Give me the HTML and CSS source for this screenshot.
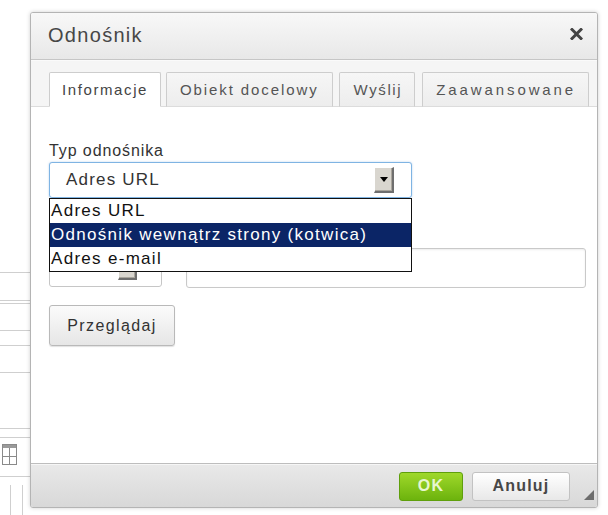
FILE: index.html
```html
<!DOCTYPE html>
<html lang="pl">
<head>
<meta charset="utf-8">
<title>Odnośnik</title>
<link rel="stylesheet" href="styles.css">
</head>
<body>
<div class="page">
  <!-- edge of the editor that sits behind the dialog -->
  <div class="editor-edge">
    <div class="hl hl-a"></div>
    <div class="hl hl-b"></div>
    <div class="hl hl-c"></div>
    <div class="hl hl-d"></div>
    <div class="hl hl-e"></div>
    <div class="hl hl-f"></div>
    <div class="hl hl-g"></div>
    <div class="hl hl-h"></div>
    <svg class="tbl-icon" width="16" height="22" viewBox="0 0 16 22">
      <rect x="0.5" y="0.5" width="14" height="20" fill="#fff" stroke="#8a8a8a"/>
      <rect x="1" y="1" width="13" height="3" fill="#9a9a9a"/>
      <line x1="7.5" y1="4" x2="7.5" y2="20" stroke="#8a8a8a"/>
      <line x1="1" y1="12.5" x2="14" y2="12.5" stroke="#8a8a8a"/>
    </svg>
    <div class="hl hl-i"></div>
    <div class="edge-box"></div>
  </div>

  <div class="dialog">
    <div class="dlg-title">
      <span class="dlg-title-text">Odnośnik</span>
      <svg class="dlg-close" width="13" height="12" viewBox="0 0 13 12">
        <path d="M2 1.5 L11 10.5 M11 1.5 L2 10.5" stroke="#444" stroke-width="3" stroke-linecap="square"/>
      </svg>
    </div>

    <div class="dlg-tabs">
      <div class="tab tab-active">Informacje</div>
      <div class="tab tab-target">Obiekt docelowy</div>
      <div class="tab tab-upload">Wyślij</div>
      <div class="tab tab-advanced">Zaawansowane</div>
    </div>

    <div class="dlg-body">
      <div class="field-label">Typ odnośnika</div>
      <div class="select-wrap">
        <div class="select select-focus">
          <span class="select-value">Adres URL</span>
          <span class="select-btn"><span class="tri"></span></span>
        </div>
        <ul class="listbox">
          <li>Adres URL</li>
          <li class="sel">Odnośnik wewnątrz strony (kotwica)</li>
          <li>Adres e-mail</li>
        </ul>
      </div>

      <!-- protocol select and address field, partly covered by the open list -->
      <div class="url-row">
        <div class="url-col proto-col">
          <div class="label-space"></div>
          <div class="select proto">
            <span class="select-btn small"><span class="tri"></span></span>
          </div>
        </div>
        <div class="url-col addr-col">
          <div class="label-space"></div>
          <div class="text-input"></div>
        </div>
      </div>

      <div class="btn-browse">Przeglądaj</div>
    </div>

    <div class="dlg-footer">
      <div class="btn btn-ok">OK</div>
      <div class="btn btn-cancel">Anuluj</div>
      <span class="grip"></span>
    </div>
  </div>
</div>
</body>
</html>
```

FILE: styles.css
```css
* { box-sizing: border-box; }

html, body {
  margin: 0;
  padding: 0;
  background: #fff;
}

body {
  font-family: "Liberation Sans", Arial, sans-serif;
  color: #333;
  width: 608px;
  height: 515px;
  overflow: hidden;
}

.page {
  position: relative;
  width: 608px;
  height: 515px;
}

/* ---- editor edge on the left ---- */
.editor-edge {
  width: 30px;
  padding-top: 272px;
  display: flex;
  flex-direction: column;
}

.hl {
  height: 1px;
  background: #cfcfcf;
}
.hl-a { margin-top: 0; }
.hl-b { margin-top: 27px; }
.hl-c { margin-top: 2px; }
.hl-d { margin-top: 26px; }
.hl-e { margin-top: 14px; }
.hl-f { margin-top: 26px; }
.hl-g { margin-top: 55px; }
.hl-h { margin-top: 8px; }

.tbl-icon {
  margin: 6px 0 0 2px;
}

.hl-i { margin-top: 10px; }

.edge-box {
  margin: 8px 0 0 10px;
  width: 13px;
  height: 40px;
  border-left: 1px solid #cfcfcf;
  border-right: 1px solid #cfcfcf;
}

/* ---- dialog ---- */
.dialog {
  position: absolute;
  left: 30px;
  top: 12px;
  width: 568px;
  height: 496px;
  border: 1px solid #b4b4b4;
  border-radius: 3px;
  box-shadow: 0 0 4px rgba(0, 0, 0, 0.18);
  background: #fff;
  display: flex;
  flex-direction: column;
  overflow: hidden;
}

.dlg-title {
  height: 47px;
  flex: none;
  display: flex;
  align-items: center;
  justify-content: space-between;
  padding: 0 14px 2px 17px;
  background: linear-gradient(#f8f8f8, #e8e8e8);
  border-bottom: 1px solid #c6c6c6;
}

.dlg-title-text {
  font-size: 20px;
  letter-spacing: 1.3px;
  color: #474747;
}

.dlg-close {
  display: block;
  margin-top: -3px;
}

/* ---- tabs ---- */
.dlg-tabs {
  flex: none;
  height: 47px;
  display: flex;
  align-items: flex-end;
  gap: 5px;
  padding: 0 0 0 18px;
  background: #f5f5f5;
  border-top: 1px solid #fafafa;
  border-bottom: 1px solid #dcdcdc;
}

.tab {
  height: 35px;
  margin-bottom: -1px;
  padding: 0 12px 0 12px;
  display: flex;
  align-items: center;
  font-size: 15px;
  letter-spacing: 1.6px;
  color: #555;
  background: linear-gradient(#f6f6f6, #ededed);
  border: 1px solid #cdcdcd;
  border-bottom-color: #dcdcdc;
  border-radius: 2px 2px 0 0;
}

.tab-active {
  background: #fff;
  border-bottom-color: #fff;
  color: #444;
}

.tab-target {
  letter-spacing: 1.9px;
  padding: 0 13px;
}

.tab-upload {
  padding: 0 12px 0 14px;
  margin-left: 1px;
}

.tab-advanced {
  letter-spacing: 2.9px;
  padding: 0 12px 0 13px;
  margin-left: 2px;
}

/* ---- body ---- */
.dlg-body {
  flex: 1;
  padding: 34px 11px 0 18px;
  background: #fff;
}

.field-label {
  font-size: 16px;
  letter-spacing: 0.9px;
  line-height: 19px;
  color: #333;
}

.select-wrap {
  position: relative;
  margin-top: 2px;
  width: 363px;
}

.select {
  height: 36px;
  display: flex;
  align-items: center;
  justify-content: space-between;
  padding: 0 17px 0 16px;
  border: 1px solid #c6c6c6;
  border-radius: 3px;
  background: #fff;
}

.select-focus {
  border-color: #7fb4e3;
  box-shadow: 0 0 2px rgba(100, 160, 220, 0.5);
}

.select-value {
  font-size: 17px;
  letter-spacing: 1.2px;
  color: #333;
}

.select-btn {
  width: 20px;
  height: 26px;
  display: flex;
  align-items: center;
  justify-content: center;
  background: #d9d6cf;
  border-top: 1px solid #fff;
  border-left: 1px solid #fff;
  border-right: 2px solid #6f6f6f;
  border-bottom: 2px solid #6f6f6f;
  box-shadow: inset -1px -1px 0 #a9a59c;
}

.tri {
  width: 0;
  height: 0;
  border-left: 4px solid transparent;
  border-right: 4px solid transparent;
  border-top: 5px solid #000;
}

/* open option list */
.listbox {
  position: absolute;
  left: 0;
  top: 36px;
  width: 363px;
  margin: 0;
  padding: 0;
  list-style: none;
  border: 1px solid #111;
  background: #fff;
  z-index: 2;
}

.listbox li {
  height: 24px;
  line-height: 24px;
  padding-left: 1px;
  font-size: 17px;
  letter-spacing: 1.3px;
  color: #111;
  white-space: nowrap;
}

.listbox li.sel {
  background: #0b2566;
  color: #fff;
}

/* protocol + address row */
.url-row {
  display: flex;
  gap: 24px;
  margin-top: 19px;
}

.label-space {
  height: 31px;
}

.proto-col { width: 113px; }
.addr-col { flex: 1; }

.proto {
  height: 39px;
  padding: 0 24px 0 10px;
  justify-content: flex-end;
}

.select-btn.small {
  width: 19px;
  height: 24px;
}

.text-input {
  height: 40px;
  border: 1px solid #c9c9c9;
  border-radius: 3px;
  box-shadow: inset 0 1px 2px rgba(0, 0, 0, 0.08);
}

.btn-browse {
  display: inline-flex;
  align-items: center;
  justify-content: center;
  margin-top: 17px;
  width: 126px;
  height: 41px;
  font-size: 16px;
  letter-spacing: 1.4px;
  color: #333;
  border: 1px solid #b9b9b9;
  border-radius: 3px;
  background: linear-gradient(#fbfbfb, #e6e6e6);
  box-shadow: 0 1px 1px rgba(0, 0, 0, 0.12);
}

/* ---- footer ---- */
.dlg-footer {
  flex: none;
  height: 44px;
  display: flex;
  align-items: center;
  justify-content: flex-end;
  gap: 9px;
  padding: 1px 27px 0 0;
  position: relative;
  background: linear-gradient(#e9e9e9, #d8d8d8);
  border-top: 1px solid #bdbdbd;
  box-shadow: inset 0 1px 0 #f6f6f6;
}

.btn {
  height: 29px;
  display: flex;
  align-items: center;
  justify-content: center;
  font-size: 16px;
  font-weight: bold;
  letter-spacing: 1.2px;
  border-radius: 3px;
}

.btn-ok {
  width: 64px;
  color: #e7f6cf;
  background: linear-gradient(#9fd82a, #6cb30d);
  border: 1px solid #5f9f0c;
}

.btn-cancel {
  width: 98px;
  color: #474747;
  background: linear-gradient(#ffffff, #e8e8e8);
  border: 1px solid #c2c2c2;
}

.grip {
  position: absolute;
  right: 3px;
  bottom: 7px;
  width: 0;
  height: 0;
  border-left: 10px solid transparent;
  border-bottom: 10px solid #6c6c6c;
}
```
